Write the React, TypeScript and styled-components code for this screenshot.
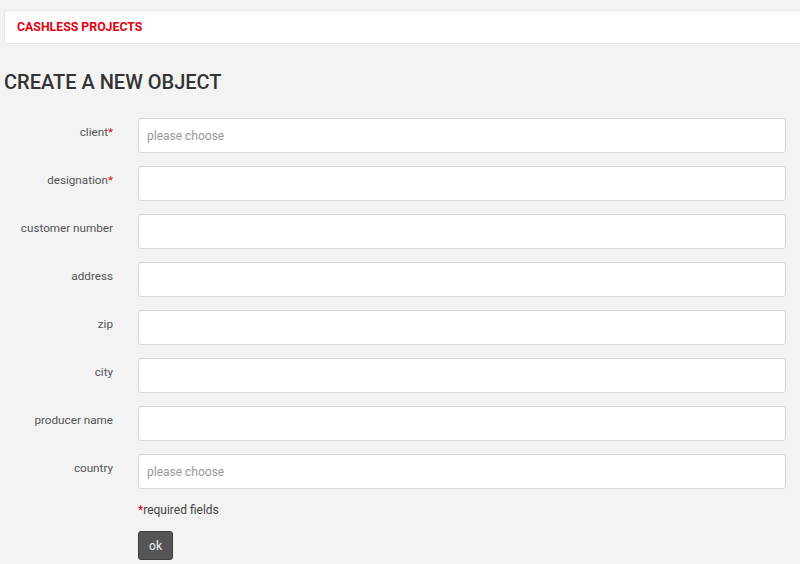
import React from "react";
import styled, { createGlobalStyle } from "styled-components";

const Global = createGlobalStyle`
  html, body {
    margin: 0;
    padding: 0;
    background: #f3f3f3;
    font-family: Roboto, "Liberation Sans", sans-serif;
    overflow: hidden;
  }
`;

const Page = styled.div`
  padding: 10px 0 0 4px;
  width: 800px;
  box-sizing: border-box;
`;

const TopBar = styled.div`
  height: 34px;
  margin-right: -12px;
  background: #fff;
  border: 1px solid #e6e6e6;
  border-radius: 3px;
  box-sizing: border-box;
  display: flex;
  align-items: center;
  padding-left: 12px;
`;

const Brand = styled.span`
  color: #e1000f;
  font-weight: 700;
  font-size: 12.3px;
`;

const Title = styled.h1`
  margin: 24px 0 22px;
  font-size: 20px;
  font-weight: 500;
  color: #333;
  line-height: 28px;
`;

const Form = styled.form`
  display: grid;
  grid-template-columns: 109px 648px;
  column-gap: 25px;
  row-gap: 13px;
`;

const Label = styled.label`
  text-align: right;
  font-size: 11.7px;
  color: #555;
  padding-top: 6px;
  line-height: 16px;
`;

const Star = styled.span`
  color: #e1000f;
`;

const Field = styled.input`
  height: 35px;
  box-sizing: border-box;
  border: 1px solid #d6d6d6;
  border-radius: 3px;
  background: #fff;
  padding: 0 8px;
  font-family: inherit;
  font-size: 12px;
  color: #555;
  outline: none;
  &::placeholder {
    color: #999;
  }
`;

const Note = styled.div`
  grid-column: 2;
  font-size: 12px;
  color: #444;
  margin-top: 1px;
`;

const Submit = styled.button`
  grid-column: 2;
  justify-self: start;
  width: 35px;
  height: 29px;
  margin-top: 1px;
  background: #555;
  border: 1px solid #3f3f3f;
  border-radius: 3px;
  color: #eee;
  font-family: inherit;
  font-size: 12px;
  padding: 0;
`;

const fields: { label: string; required?: boolean; placeholder?: string }[] = [
  { label: "client", required: true, placeholder: "please choose" },
  { label: "designation", required: true },
  { label: "customer number" },
  { label: "address" },
  { label: "zip" },
  { label: "city" },
  { label: "producer name" },
  { label: "country", placeholder: "please choose" },
];

export default function App() {
  return (
    <Page>
      <Global />
      <TopBar>
        <Brand>CASHLESS PROJECTS</Brand>
      </TopBar>
      <Title>CREATE A NEW OBJECT</Title>
      <Form onSubmit={(e) => e.preventDefault()}>
        {fields.map((f) => (
          <React.Fragment key={f.label}>
            <Label>
              {f.label}
              {f.required && <Star>*</Star>}
            </Label>
            <Field placeholder={f.placeholder} />
          </React.Fragment>
        ))}
        <Note>
          <Star>*</Star>required fields
        </Note>
        <Submit type="submit">ok</Submit>
      </Form>
    </Page>
  );
}
